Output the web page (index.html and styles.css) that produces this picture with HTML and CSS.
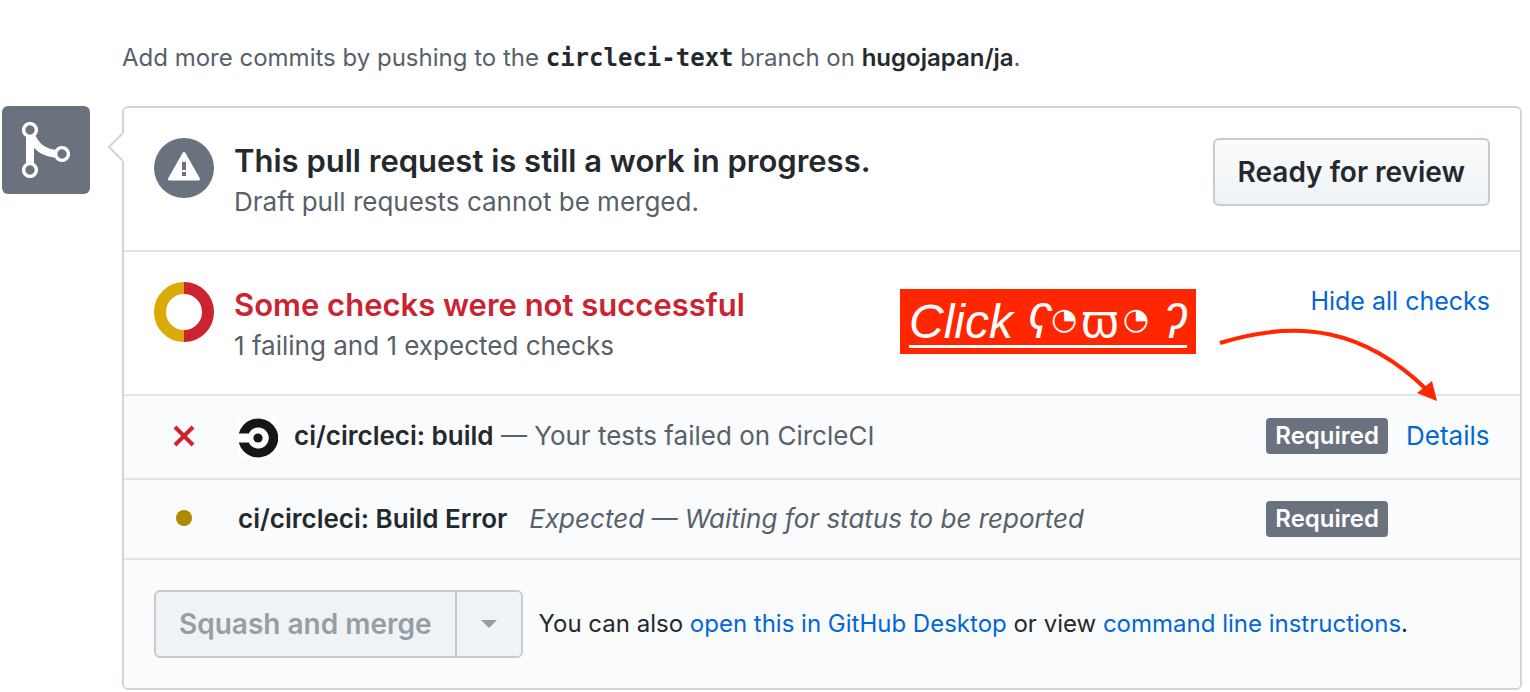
FILE: index.html
```html
<!DOCTYPE html>
<html lang="en">
<head>
<meta charset="utf-8">
<title>Pull request</title>
<link rel="stylesheet" href="styles.css">
</head>
<body>
<main class="page">
  <p class="push-hint">Add more commits by pushing to the <strong class="branch">circleci-text</strong> branch on <strong class="repo">hugojapan/ja</strong>.</p>
  <div class="merge">
    <div class="merge-badge">
      <svg class="merge-icon" viewBox="0 0 48 56" aria-hidden="true">
        <path d="M8 12V44" stroke="#fff" stroke-width="8" fill="none"/>
        <path d="M8 10C12 24 22 32 38 32" stroke="#fff" stroke-width="8" fill="none"/>
        <circle cx="8" cy="8" r="6.400" fill="#6a737d" stroke="#fff" stroke-width="3.400"/>
        <circle cx="8" cy="48" r="6.400" fill="#6a737d" stroke="#fff" stroke-width="3.400"/>
        <circle cx="40" cy="32" r="6.400" fill="#6a737d" stroke="#fff" stroke-width="3.400"/>
      </svg>
    </div>
    <section class="panel">
      <svg class="caret" viewBox="0 0 16 30" aria-hidden="true">
        <path d="M16 0V30L1 15Z" fill="#fff"/>
        <path d="M15 1L1 15L15 29" fill="none" stroke="#d1d5da" stroke-width="2"/>
      </svg>
      <div class="row summary">
        <svg class="status" viewBox="0 0 60 60" aria-hidden="true">
          <circle cx="30" cy="30" r="30" fill="#6a737d"/>
          <path d="M30 15.500L44.500 41H15.500Z" fill="#fff" stroke="#fff" stroke-width="3" stroke-linejoin="round"/>
          <path d="M28 24h4v8h-4zM28 34h4v4h-4z" fill="#6a737d"/>
        </svg>
        <div class="summary-text">
          <h2 class="title">This pull request is still a work in progress.</h2>
          <p class="subtitle">Draft pull requests cannot be merged.</p>
        </div>
        <button class="btn" type="button">Ready for review</button>
      </div>
      <div class="row summary">
        <svg class="status" viewBox="0 0 60 60" aria-hidden="true">
          <path d="M30 6A24 24 0 0 0 30 54" fill="none" stroke="#dbab09" stroke-width="12"/>
          <path d="M30 6A24 24 0 0 1 30 54" fill="none" stroke="#cb2431" stroke-width="12"/>
        </svg>
        <div class="summary-text">
          <h2 class="title title-failed">Some checks were not successful</h2>
          <p class="subtitle">1 failing and 1 expected checks</p>
        </div>
        <a class="link toggle-checks" href="#checks">Hide all checks</a>
        <div class="callout"><span class="callout-text"><span>Click</span><span class="face"><span>ʕ</span><span class="eye">◔</span><span class="muzzle">ϖ</span><span class="eye">◔</span></span><span>ʔ</span></span></div>
        <svg class="arrow" viewBox="0 0 226 80" aria-hidden="true">
          <path d="M5 18C85 -7 150 5 211 64" fill="none" stroke="#ff2600" stroke-width="4"/>
          <path d="M222 76L202 68L217 56Z" fill="#ff2600"/>
        </svg>
      </div>
      <div class="row check check-build" id="checks">
        <svg class="check-state" viewBox="0 0 60 24" aria-hidden="true">
          <path d="M21 3L39 21M39 3L21 21" stroke="#cb2431" stroke-width="4" fill="none"/>
        </svg>
        <svg class="app-logo" viewBox="0 0 40 40" aria-hidden="true">
          <rect width="40" height="40" fill="#fff"/>
          <path d="M0.800 15.500A20 19.500 0 1 1 .8 24.500H10.800A10.500 10.500 0 1 0 10.800 15.500Z" fill="#161616"/>
          <circle cx="20" cy="20" r="4.600" fill="#161616"/>
        </svg>
        <p class="check-text"><strong class="check-name">ci/circleci: build</strong> — Your tests failed on CircleCI</p>
        <span class="label">Required</span>
        <a class="link check-link" href="#details">Details</a>
      </div>
      <div class="row check check-expected">
        <svg class="check-state" viewBox="0 0 60 24" aria-hidden="true">
          <circle cx="30" cy="11" r="8" fill="#b08800"/>
        </svg>
        <p class="check-text"><strong class="check-name">ci/circleci: Build Error</strong><em class="check-note">Expected — Waiting for status to be reported</em></p>
        <span class="label">Required</span>
        <span class="check-link"></span>
      </div>
      <div class="row actions">
        <div class="btn-group">
          <button class="btn btn-merge" type="button" disabled>Squash and merge</button>
          <button class="btn btn-caret" type="button" disabled aria-label="Select merge method">
            <svg class="triangle" viewBox="0 0 16 8" aria-hidden="true"><path d="M0 0H16L8 8Z" fill="#959da5"/></svg>
          </button>
        </div>
        <p class="actions-text">You can also <a class="link" href="#desktop">open this in GitHub Desktop</a> or view <a class="link" href="#cli">command line instructions</a>.</p>
      </div>
    </section>
  </div>
</main>
</body>
</html>
```
FILE: styles.css
```css
* {
  box-sizing: border-box;
}

body {
  margin: 0;
  background: #fff;
  color: #24292e;
  font: 26px/40px Inter, "Liberation Sans", sans-serif;
}

h2,
p {
  margin: 0;
}

.page {
  padding: 38px 8px 2px 2px;
}

.push-hint {
  padding-left: 120px;
  margin-bottom: 28px;
  color: #586069;
  font-size: 24px;
}

.branch {
  color: #24292e;
  font-family: "DejaVu Sans Mono", monospace;
  font-size: 24px;
  line-height: 1;
}

.repo {
  color: #24292e;
  font-weight: 600;
}

.merge {
  display: flex;
  align-items: flex-start;
  gap: 32px;
}

.merge-badge {
  display: flex;
  flex: none;
  width: 88px;
  height: 88px;
  padding: 16px 20px;
  border-radius: 6px;
  background: #6a737d;
}

.merge-icon {
  width: 48px;
  height: 56px;
}

.panel {
  position: relative;
  flex: 1;
  min-width: 0;
  border: 2px solid #d1d5da;
  border-radius: 6px;
}

.caret {
  position: absolute;
  top: 24px;
  left: -16px;
  width: 16px;
  height: 30px;
}

.row {
  display: flex;
  border-bottom: 2px solid #e1e4e8;
}

.row:last-child {
  border-bottom: 0;
}

.summary {
  position: relative;
  align-items: flex-start;
  gap: 20px;
  padding: 30px;
}

.status {
  flex: none;
  width: 60px;
  height: 60px;
}

.summary-text {
  flex: 1;
}

.title {
  font-size: 31px;
  font-weight: 600;
  line-height: 46px;
}

.title-failed {
  color: #cb2431;
}

.subtitle {
  color: #586069;
  line-height: 36px;
}

.link {
  color: #0366d6;
  text-decoration: none;
}

.toggle-checks {
  font-size: 25px;
  line-height: 38px;
}

.btn {
  height: 68px;
  padding: 0 23px;
  border: 2px solid #c8cbcf;
  border-radius: 6px;
  background: linear-gradient(#fafbfc, #eff3f6);
  color: #24292e;
  font: 600 28px/40px Inter, "Liberation Sans", sans-serif;
}

.callout {
  position: absolute;
  top: 37px;
  right: 324px;
  width: 296px;
  height: 65px;
  padding: 0 9px;
  background: #ff2600;
  color: #fff;
  font: italic 48px/65px "Liberation Sans", "DejaVu Sans", sans-serif;
  white-space: nowrap;
}

.callout-text {
  display: flex;
  justify-content: space-between;
  height: 59px;
  border-bottom: 3px solid #fff;
}

.face {
  display: flex;
}

.eye {
  font: 30px/60px "DejaVu Sans", sans-serif;
}

.muzzle {
  padding: 0 4px;
  font-style: normal;
}

.arrow {
  position: absolute;
  top: 73px;
  right: 79px;
  z-index: 1;
  width: 226px;
  height: 80px;
}

.check {
  align-items: center;
  padding: 0 30px;
  background: #fafbfc;
}

.check-build {
  min-height: 84px;
  padding-bottom: 2px;
}

.check-expected {
  min-height: 80px;
}

.check-state {
  flex: none;
  width: 60px;
  height: 24px;
  margin-right: 24px;
}

.app-logo {
  flex: none;
  width: 40px;
  height: 40px;
  margin: 4px 16px 0 0;
}

.check-text {
  flex: 1;
  color: #586069;
}

.check-name {
  color: #24292e;
  font-weight: 600;
}

.check-note {
  margin-left: 22px;
}

.label {
  padding: 0 9px;
  border-radius: 4px;
  background: #6a737d;
  color: #fff;
  font-size: 24px;
  font-weight: 600;
  line-height: 36px;
}

.check-link {
  width: 84px;
  margin-left: 18px;
}

.actions {
  align-items: center;
  gap: 16px;
  padding: 30px;
  border-radius: 0 0 4px 4px;
  background: #fafbfc;
}

.btn-group {
  display: flex;
  flex: none;
}

.btn:disabled {
  background: #eff3f6;
  color: #959da5;
}

.btn-merge {
  border-radius: 6px 0 0 6px;
}

.btn-caret {
  display: flex;
  align-items: center;
  padding: 0 24px;
  margin-left: -2px;
  border-radius: 0 6px 6px 0;
}

.triangle {
  width: 16px;
  height: 8px;
}

.actions-text {
  font-size: 24px;
}
```
